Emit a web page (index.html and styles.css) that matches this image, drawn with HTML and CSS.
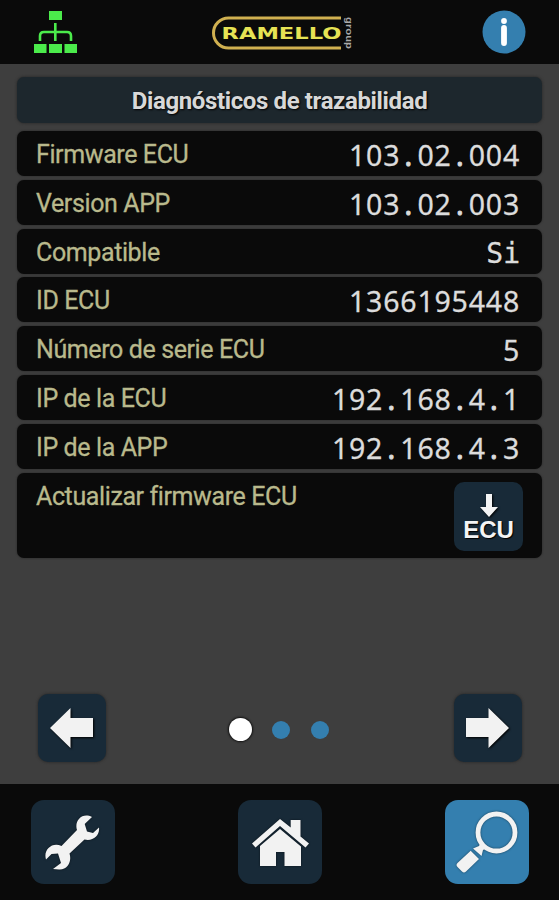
FILE: index.html
```html
<!DOCTYPE html>
<html lang="es">
<head>
    <meta charset="UTF-8">
    <meta name="viewport" content="width=device-width, initial-scale=1.0">
    <title>Diagnósticos de trazabilidad</title>
    <link rel="stylesheet" href="styles.css">
</head>
<body>
    <header class="topbar">
        <svg class="network" width="44" height="44" viewBox="0 0 44 44">
            <path fill="#4beb4b" d="M15 1h13v9H15zM0 34h12.500v9H0zM15 34h13v9H15zM30.500 34H43v9H30.500z"/>
            <path fill="none" stroke="#4beb4b" stroke-width="2.600" d="M21.300 13v18M6 31v-5q0-4 4-4h23q4 0 4 4v5"/>
        </svg>
        <svg class="logo" width="142" height="36" viewBox="0 0 142 36">
            <path fill="none" stroke="#d0b050" stroke-width="3" d="M129 3H16.500a15 15 0 0 0 0 30H129"/>
            <text class="logo-name" x="9.500" y="24" textLength="120" lengthAdjust="spacingAndGlyphs">RAMELLO</text>
            <text class="logo-group" transform="translate(134 2) rotate(90)" textLength="32" lengthAdjust="spacingAndGlyphs">group</text>
        </svg>
        <svg class="info" width="44" height="44" viewBox="0 0 44 44">
            <circle cx="22" cy="22" r="21.500" fill="#347faf"/>
            <circle cx="22" cy="11" r="2.900" fill="#fff"/>
            <path stroke="#fff" stroke-width="5.800" stroke-linecap="round" d="M22 18v15"/>
        </svg>
    </header>
    <main class="content">
        <h1 class="title">Diagnósticos de trazabilidad</h1>
        <div class="row"><span class="label">Firmware ECU</span><span class="value">103<i>.</i>02<i>.</i>004</span></div>
        <div class="row"><span class="label">Version APP</span><span class="value">103<i>.</i>02<i>.</i>003</span></div>
        <div class="row"><span class="label">Compatible</span><span class="value word">Si</span></div>
        <div class="row"><span class="label">ID ECU</span><span class="value">1366195448</span></div>
        <div class="row"><span class="label">Número de serie ECU</span><span class="value">5</span></div>
        <div class="row"><span class="label">IP de la ECU</span><span class="value">192<i>.</i>168<i>.</i>4<i>.</i>1</span></div>
        <div class="row"><span class="label">IP de la APP</span><span class="value">192<i>.</i>168<i>.</i>4<i>.</i>3</span></div>
        <div class="row update">
            <span class="label">Actualizar firmware ECU</span>
            <button class="ecu-btn">
                <svg width="18" height="24" viewBox="0 0 18 24"><path fill="#f4f4f4" d="M6 0h6v13h6L9 23 0 13h6z"/></svg>
                <span>ECU</span>
            </button>
        </div>
    </main>
    <div class="pager">
        <button class="arrow-btn">
            <svg width="44" height="40" viewBox="0 0 44 40"><path fill="#f2f2f2" d="M0 20 20.500 0v10H43v19H20.500v11z"/></svg>
        </button>
        <div class="dots">
            <span class="dot active"></span>
            <span class="dot"></span>
            <span class="dot"></span>
        </div>
        <button class="arrow-btn">
            <svg width="44" height="40" viewBox="0 0 44 40"><path fill="#f2f2f2" d="M43 20 22.500 0v10H0v19h22.500v11z"/></svg>
        </button>
    </div>
    <nav class="navbar">
        <button class="nav-btn">
            <svg width="84" height="84" viewBox="0 0 84 84">
                <path fill="#f2f2f2" d="M61 17 53.700 24 56 31.500 62 33l6-5.500c1 8-6 14-14.500 12L38.500 53.500C41 61 37 70 28 69.500l-6-.5 8-6-3-9.500-6.500.5-5.500 5.500C12 50 21 41.500 30.500 46L46 30C43 21 51 12 61 17z"/>
            </svg>
        </button>
        <button class="nav-btn">
            <svg width="84" height="84" viewBox="0 0 84 84">
                <path fill="#f2f2f2" d="M42 19 52.700 27.500V20h9.800v16.500L71 43.500l-3.500 4L42 26 17.500 47.500 14 43.500z"/>
                <path fill="#f2f2f2" d="M42 29 63 46.500V66H46.500V52H38v14H22V46z"/>
            </svg>
        </button>
        <button class="nav-btn active">
            <svg width="84" height="84" viewBox="0 0 84 84">
                <circle cx="51.500" cy="32.500" r="18.500" fill="none" stroke="#f2f2f2" stroke-width="4.800"/>
                <path fill="#f2f2f2" d="M36 42 42 48 38 50 36.500 56 28 48.500 34 46zM25.700 50.700 34 59 21 71.500q-2 2-4 0L12.500 67q-2-2 0-4z"/>
            </svg>
        </button>
    </nav>
</body>
</html>
```
FILE: styles.css
```css
* {
    box-sizing: border-box;
}
body {
    margin: 0;
    height: 900px;
    display: flex;
    flex-direction: column;
    overflow: hidden;
    background-color: #3e3e3e;
    font-family: Roboto, sans-serif;
}
button {
    padding: 0;
    border: none;
    background-color: #182a38;
}
svg {
    display: block;
}
.topbar {
    height: 64px;
    padding: 10px 33px 0 34px;
    display: flex;
    justify-content: space-between;
    background-color: #0a0a0a;
}
.logo {
    margin: 5px 0 0 6px;
}
.logo-name {
    font: bold 15.500px "DejaVu Sans", sans-serif;
    fill: #e6e354;
}
.logo-group {
    font: bold 9px "Liberation Sans", sans-serif;
    fill: #aaa;
}
.content {
    padding: 13px 17px 0;
}
.title {
    height: 46px;
    margin: 0 0 8px;
    border-radius: 7px;
    background-color: #1d272d;
    color: #d8d8d8;
    font-size: 24px;
    font-weight: bold;
    line-height: 48px;
    letter-spacing: -0.370px;
    text-align: center;
    text-shadow: 1px 1px 2px #000;
    box-shadow: 0 0 3px #222;
}
.row {
    height: 45px;
    margin-bottom: 3.800px;
    padding: 0 22px 0 19px;
    display: flex;
    justify-content: space-between;
    border-radius: 7px;
    background-color: #0a0a0a;
    box-shadow: 0 0 2px #222;
}
.label {
    color: #b9b98c;
    font-size: 25px;
    line-height: 48px;
    letter-spacing: -0.390px;
    -webkit-text-stroke: 0.300px #b9b98c;
}
.value {
    color: #dcdcdc;
    font-family: "Noto Sans", sans-serif;
    font-size: 28.500px;
    line-height: 48px;
    letter-spacing: 0.800px;
    -webkit-text-stroke: 0.300px #dcdcdc;
}
.value i {
    display: inline-block;
    width: 17.100px;
    font-style: normal;
    text-align: center;
    -webkit-text-stroke-width: 1px;
}
.value.word {
    font-family: "DejaVu Sans Mono", monospace;
    font-size: 28px;
    line-height: 50px;
    letter-spacing: 0;
}
.update {
    height: 85px;
    padding-right: 19px;
}
.ecu-btn {
    width: 69px;
    height: 69px;
    margin-top: 9px;
    padding-top: 3px;
    display: flex;
    flex-direction: column;
    align-items: center;
    justify-content: center;
    border-radius: 10px;
    color: #f4f4f4;
    font: bold 24px/24px "Liberation Sans", sans-serif;
    text-shadow: 1px 1px 1px #000;
}
.pager {
    margin-top: auto;
    padding: 0 37px 22px 38px;
    display: flex;
    justify-content: space-between;
    align-items: center;
}
.arrow-btn {
    width: 68px;
    height: 68px;
    display: flex;
    align-items: center;
    justify-content: center;
    border-radius: 10px;
    box-shadow: 0 0 3px #222;
}
.arrow-btn svg,
.ecu-btn svg {
    filter: drop-shadow(1px 1px 1px #000);
}
.nav-btn svg {
    filter: drop-shadow(0 0 1px rgba(0, 0, 0, 0.5));
}
.dots {
    display: flex;
    align-items: center;
    gap: 21.500px;
    padding: 3px 2px 0 0;
}
.dot {
    width: 18px;
    height: 18px;
    border-radius: 50%;
    background-color: #347faf;
}
.dot.active {
    width: 23px;
    height: 23px;
    margin-right: -2px;
    background-color: #fff;
    box-shadow: 0 0 2px 1px #111;
}
.navbar {
    height: 116px;
    padding: 16px 30px 0 31px;
    display: flex;
    justify-content: space-between;
    background-color: #0a0a0a;
}
.nav-btn {
    width: 84px;
    height: 84px;
    border-radius: 13px;
}
.nav-btn.active {
    background-color: #347faf;
}
```
